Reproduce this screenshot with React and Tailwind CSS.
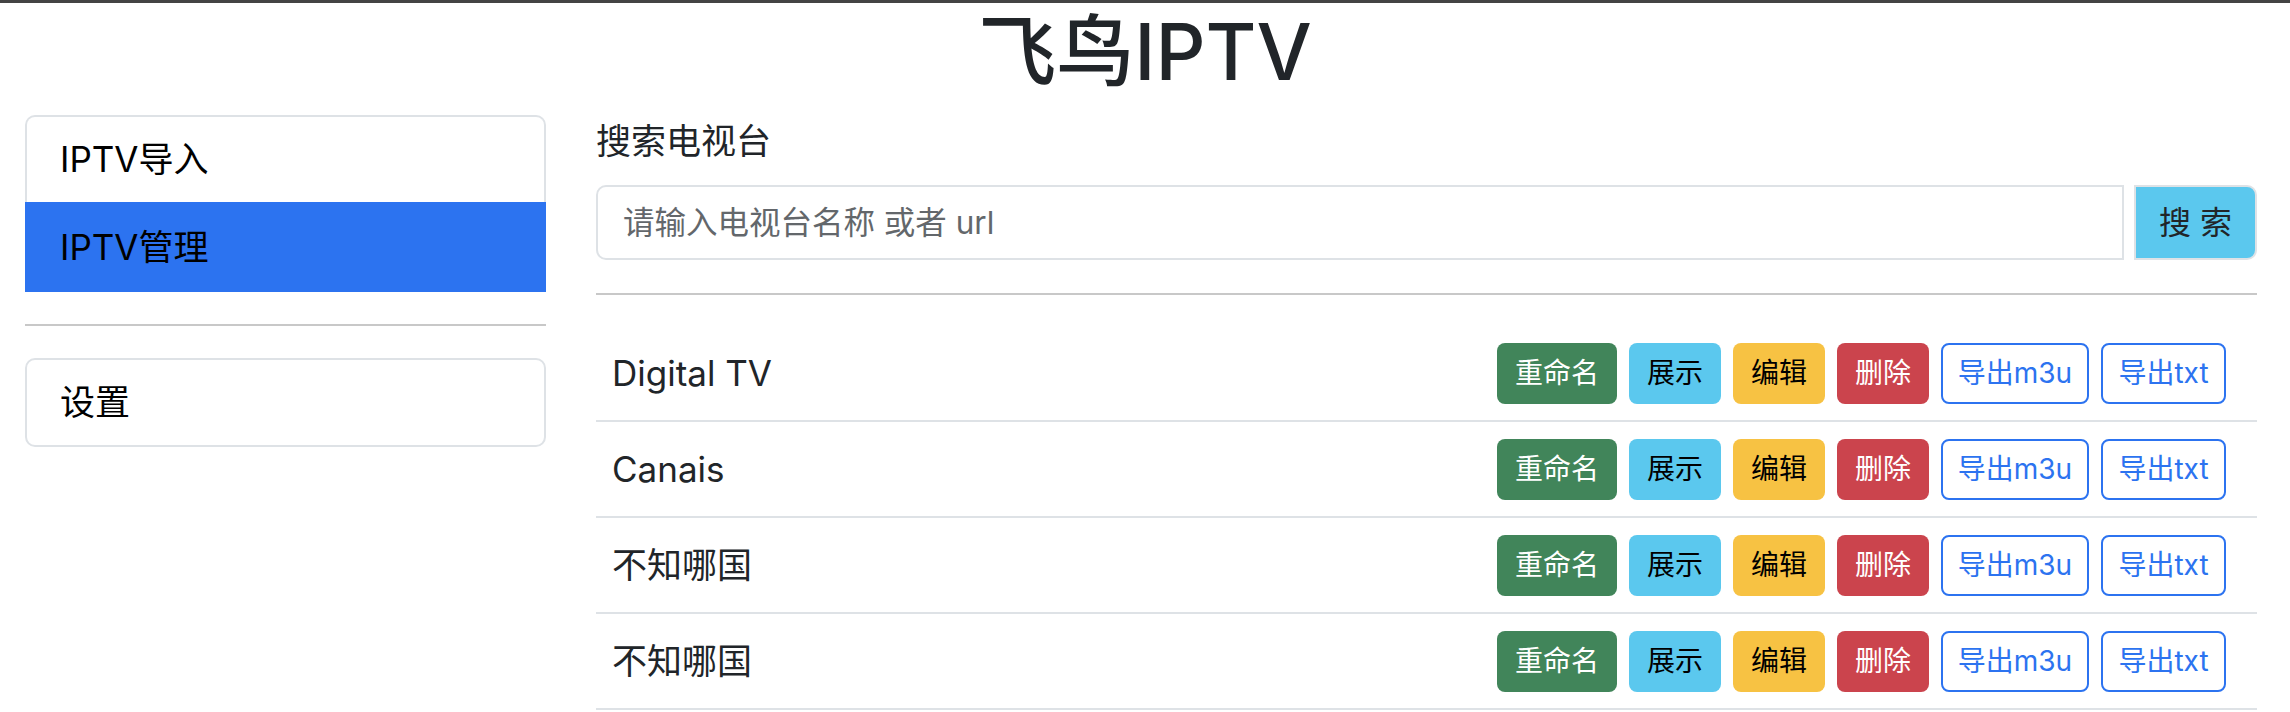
import React from 'react';

const rows = ['Digital TV', 'Canais', '不知哪国', '不知哪国'];

const font = { fontFamily: 'Inter, "Noto Sans CJK SC", sans-serif' };

function ChannelRow({ name }) {
  return (
    <div className="h-[96px] flex items-center justify-between pl-[16px] pr-[31px] border-b-2 border-[#dee2e6]">
      <span className="text-[35px] text-[#212529]">{name}</span>
      <div className="flex items-center gap-[12px] text-[28px]">
        <button className="h-[61px] w-[120px] rounded-[8px] bg-[#41855a] text-white">重命名</button>
        <button className="h-[61px] w-[92px] rounded-[8px] bg-[#5bc8ee] text-black">展示</button>
        <button className="h-[61px] w-[92px] rounded-[8px] bg-[#f7c243] text-black">编辑</button>
        <button className="h-[61px] w-[92px] rounded-[8px] bg-[#cb444d] text-white">删除</button>
        <button className="h-[61px] w-[148px] rounded-[8px] border-2 border-[#2c73f0] text-[#2c73f0]">导出m3u</button>
        <button className="h-[61px] w-[125px] rounded-[8px] border-2 border-[#2c73f0] text-[#2c73f0]">导出txt</button>
      </div>
    </div>
  );
}

export default function App() {
  return (
    <div className="min-h-screen bg-white border-t-[3px] border-[#444]" style={font}>
      {/* Header */}
      <h1 className="text-center text-[78px] leading-[94px] pt-[2px] mb-[16px] font-medium text-[#212529]">
        飞鸟IPTV
      </h1>

      <div className="flex pl-[25px] pr-[33px] gap-[50px]">
        {/* Sidebar */}
        <div className="w-[521px] shrink-0 text-[35px] text-black">
          <div>
            <div className="h-[87px] flex items-center pl-[33px] border-2 border-b-0 border-[#dee2e6] rounded-t-[10px]">
              IPTV导入
            </div>
            <div className="h-[90px] flex items-center pl-[35px] bg-[#2c73f0]">
              IPTV管理
            </div>
          </div>
          <hr className="mt-[32px] mb-[32px] border-0 h-[2px] bg-[#c8c8c8]" />
          <div className="h-[89px] flex items-center pl-[33px] border-2 border-[#dee2e6] rounded-[10px]">
            设置
          </div>
        </div>

        {/* Content */}
        <div className="flex-1 min-w-0">
          <div className="text-[35px] leading-[52px] text-[#212529] mb-[18px]">搜索电视台</div>
          <div className="flex h-[75px] gap-[10px]">
            <input
              type="text"
              placeholder="请输入电视台名称 或者 url"
              className="flex-1 min-w-0 border-2 border-[#dee2e6] rounded-l-[10px] pl-[25px] text-[31.5px] placeholder:text-[#63676b] outline-none"
            />
            <button className="w-[123px] border-2 border-[#dee2e6] bg-[#5bc8ee] rounded-r-[10px] text-[32px] text-[#212529]">
              搜 索
            </button>
          </div>
          <hr className="mt-[33px] mb-[31px] border-0 h-[2px] bg-[#c8c8c8]" />
          <div>
            {rows.map((name, i) => (
              <ChannelRow key={i} name={name} />
            ))}
          </div>
        </div>
      </div>
    </div>
  );
}
